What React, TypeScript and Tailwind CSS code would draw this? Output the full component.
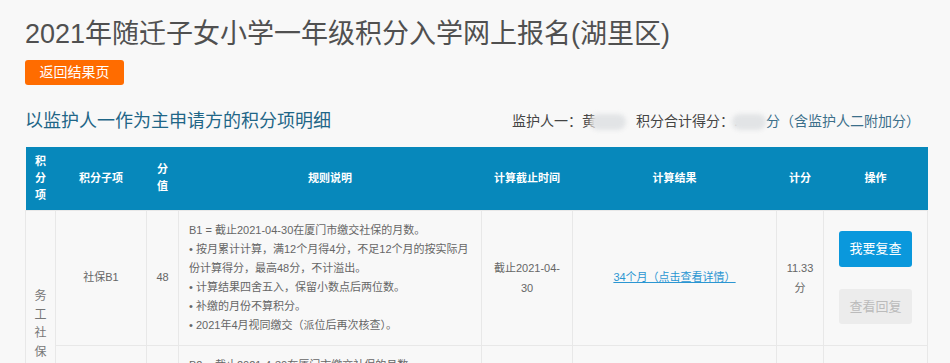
import React from "react";

const FONT = { fontFamily: '"Liberation Sans", "Noto Sans CJK SC", sans-serif' };

const HEADERS = [
  { label: "积分项", w: "w-[30px]", stack: true },
  { label: "积分子项", w: "w-[91px]" },
  { label: "分值", w: "w-[32px]", stack: true },
  { label: "规则说明", w: "w-[303px]" },
  { label: "计算截止时间", w: "w-[91px]" },
  { label: "计算结果", w: "w-[204px]" },
  { label: "计分", w: "w-[47px]" },
  { label: "操作", w: "w-[104px]" },
];

function Stack({ text }: { text: string }) {
  return (
    <div className="flex flex-col items-center">
      {text.split("").map((c, i) => (
        <span key={i}>{c}</span>
      ))}
    </div>
  );
}

function Blur({ w }: { w: string }) {
  return (
    <span
      className={`inline-block h-[16px] ${w} align-middle rounded-full bg-[#e2e4e6] blur-[2px] -ml-[6px]`}
    />
  );
}

export default function App() {
  return (
    <div className="min-h-screen bg-[#f8f8f8] text-[#555] pl-[25px] pr-[23px] pt-[14px]" style={FONT}>
      <h1 className="text-[27px] leading-[40px] font-normal text-[#505050]">
        2021年随迁子女小学一年级积分入学网上报名(湖里区)
      </h1>
      <button className="mt-[6px] h-[25px] w-[99px] rounded-[3px] bg-[#ff6c00] text-[14px] text-white">
        返回结果页
      </button>

      <div className="mt-[22px] flex items-center justify-between pr-[7px]">
        <h2 className="text-[18px] leading-[28px] text-[#1f6687]">以监护人一作为主申请方的积分项明细</h2>
        <div className="text-[14px] text-[#444]">
          监护人一：黄<Blur w="w-[36px]" />
          <span className="ml-[10px]">积分合计得分：</span>
          <span className="text-[#999]">.</span>
          <Blur w="w-[34px]" />
          <span className="text-[#3c6f8a]">分（含监护人二附加分）</span>
        </div>
      </div>

      <table className="mt-[12px] w-[902px] table-fixed border-collapse text-center">
        <thead>
          <tr className="h-[63px] bg-[#0788bb] text-[11px] font-bold leading-[17px] text-white">
            {HEADERS.map((h) => (
              <th key={h.label} className={`${h.w} px-0`}>
                {h.stack ? <Stack text={h.label} /> : h.label}
              </th>
            ))}
          </tr>
        </thead>
        <tbody className="text-[11px] text-[#666]">
          <tr className="h-[133px]">
            <td rowSpan={2} className="border border-[#e8e8e8] text-[12px] leading-[18.5px] text-[#777]">
              <Stack text="务工社保" />
            </td>
            <td className="border border-[#e8e8e8]">社保B1</td>
            <td className="border border-[#e8e8e8]">48</td>
            <td className="border border-[#e8e8e8] px-[10px] py-[10px] text-left leading-[19px]">
              <p>B1 = 截止2021-04-30在厦门市缴交社保的月数。</p>
              <p>• 按月累计计算，满12个月得4分，不足12个月的按实际月份计算得分，最高48分，不计溢出。</p>
              <p>• 计算结果四舍五入，保留小数点后两位数。</p>
              <p>• 补缴的月份不算积分。</p>
              <p>• 2021年4月视同缴交（派位后再次核查）。</p>
            </td>
            <td className="border border-[#e8e8e8] leading-[20px]">
              截止2021-04-
              <br />
              30
            </td>
            <td className="border border-[#e8e8e8]">
              <a href="#" className="text-[#2b96d2] underline">
                34个月（点击查看详情）
              </a>
            </td>
            <td className="border border-[#e8e8e8] leading-[20px]">
              11.33
              <br />分
            </td>
            <td className="border border-[#e8e8e8]">
              <div className="flex flex-col items-center gap-[22px]">
                <button className="h-[36px] w-[73px] rounded-[3px] bg-[#0a98dc] text-[13px] text-white">
                  我要复查
                </button>
                <button className="h-[35px] w-[73px] rounded-[3px] bg-[#ececec] text-[13px] text-[#bbb]">
                  查看回复
                </button>
              </div>
            </td>
          </tr>
          <tr className="h-[93px]">
            <td className="border border-[#e8e8e8]">社保B2</td>
            <td className="border border-[#e8e8e8]">48</td>
            <td className="border border-[#e8e8e8] px-[10px] py-[10px] text-left align-top leading-[19px]">
              <p>B2 = 截止2021-4-30在厦门市缴交社保的月数。</p>
              <p>• 按月累计计算，满12个月得4分，不足12个月的按实际月份计算得分。</p>
            </td>
            <td className="border border-[#e8e8e8]">截止2021-04-30</td>
            <td className="border border-[#e8e8e8]"></td>
            <td className="border border-[#e8e8e8]"></td>
            <td className="border border-[#e8e8e8]"></td>
          </tr>
        </tbody>
      </table>
    </div>
  );
}
